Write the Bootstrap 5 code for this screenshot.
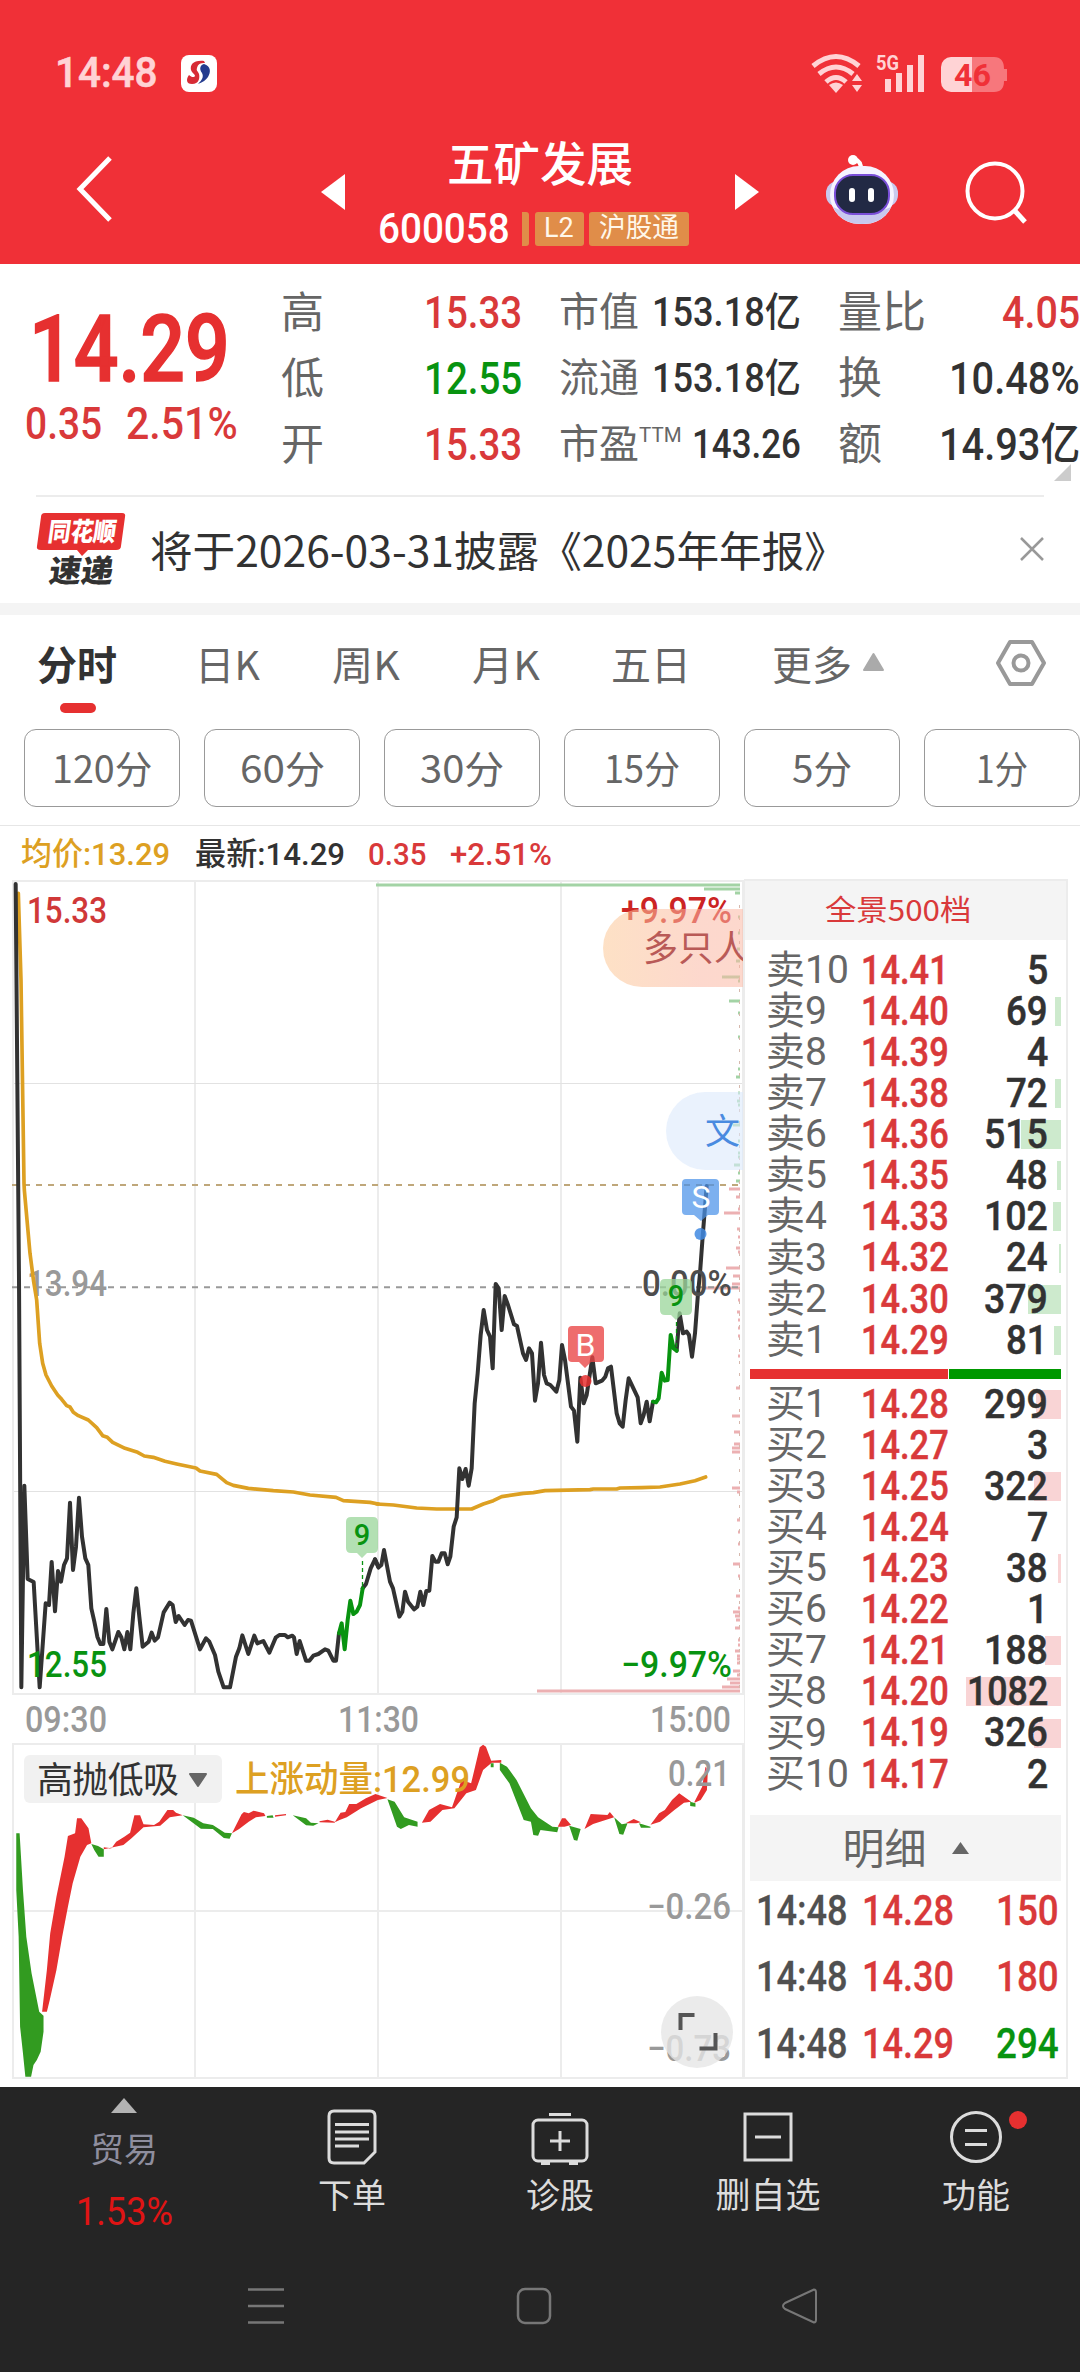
<!DOCTYPE html>
<html lang="zh-CN">
<head>
<meta charset="utf-8">
<meta name="viewport" content="width=device-width, initial-scale=1">
<title>五矿发展 600058</title>
<link href="https://cdn.jsdelivr.net/npm/bootstrap@5.3.0/dist/css/bootstrap.min.css" rel="stylesheet">
<style>
body{font-family:Roboto,"Noto Sans CJK SC",sans-serif;background:#fff;color:#323232;line-height:1}
.app{width:1080px;height:2372px;overflow:hidden}
[data-w]{display:inline-block;white-space:nowrap;line-height:1.2;flex:none}
[data-w]>span{display:inline-block;transform-origin:0 50%}
.cjk{font-family:"Noto Sans CJK SC",sans-serif}
.up{color:#d9393a}.down{color:#089310}.lbl{color:#666}
svg{display:block;flex:none;overflow:visible}
.top-zone{background:#f03037;height:264px;color:#fff}
.status{height:146px;padding:0 73px 0 55px;color:#ffd3d5}
.clock{font-size:42px;font-weight:500;-webkit-text-stroke:.6px}
.title-bar{height:118px;padding:0 54px 0 76px}
.tag{background:#e08d49;height:34px;border-radius:3px;font-size:27px;color:#fff7ea}
.quote{height:231px;padding-top:16px}
.q-main{width:281px;padding-left:25px}
.q-row{height:66px}
.q-num{font-size:44px;font-weight:500}
.q-big{font-size:92px;font-weight:500;line-height:1;margin:24px 0 0 4px;height:91px;color:#e63030;-webkit-text-stroke:1.6px}
.corner{width:17px;height:17px;background:#ccc;clip-path:polygon(100% 0,100% 100%,0 100%);right:9px;top:200px}
.rule{height:2px;background:#ececec}
.news{height:106px;padding:0 36px 2px 36px}
.band{height:12px;background:#f4f4f4}
.tabs{height:114px;padding:0 34px 18px 37px;font-size:40px;color:#666}
.tab-mark{width:36px;height:10px;border-radius:5px;background:#e63030;left:23px;top:60px}
.period{width:156px;height:78px;border:1.5px solid #999;border-radius:12px;font-size:38px;color:#666;background:#fff;padding:0 0 2px}
.info{height:54px;padding:2px 0 0 21px;font-size:32px;font-weight:500}
.chart-col{width:744px}
.book{width:324px;height:1200px;border:2px solid #ececec;border-left-width:1px;margin-top:-1px}
.book-head{height:59px;background:#f4f4f4;font-size:29px;padding:0 16px 4px 0}
.lv{height:41.1px;padding:0 18px 0 21px;font-size:39px;position:relative}
.lv b{font-weight:500;font-size:41px;-webkit-text-stroke:.5px}
.lv-name{width:95px;line-height:41px;position:relative}
.lv-bar{position:absolute;right:5px;top:6px;height:29px}
.q-end{position:relative;text-align:right}
.split{height:10px;margin:0 5px}
.detail{height:66px;margin:0 5px;background:#f4f4f4;color:#666;font-size:42px;padding-top:4px}
.tick{height:66.5px;padding:0 7px 0 11px;font-size:42px;font-weight:500;-webkit-text-stroke:.3px}
.foot{background:#252525;height:285px;color:#dcdcdc}
.nav-cell{width:208px;font-size:34px}
.dot{width:18px;height:18px;background:#e63030;border-radius:50%;right:53px;top:24px}
svg text{font-family:Roboto,"Noto Sans CJK SC",sans-serif;font-weight:500}
</style>
<script src="https://cdn.jsdelivr.net/npm/bootstrap@5.3.0/dist/js/bootstrap.bundle.min.js"></script>
</head>
<body>
<div class="app">
 <header class="top-zone">
  <div class="status d-flex align-items-center">
   <span class="clock" data-w="103">14:48</span>
   <svg style="margin-left:23px" width="36" height="37" viewBox="0 0 36 37"><rect width="36" height="37" rx="8" fill="#fff"/><path d="M23 6C12 5 9 10 10 15c1 3 4 4 4 6-1 2-4 1-6-1-3 4-3 9 3 9 7 0 8-6 7-10-1-3-3-3-2-6 1-4 3-5 8-5z" fill="#d72b35"/><path d="M23 9c7 2 7 8 4 13-2 3-5 5-10 7 4-4 6-7 4-11-3-4-2-8 2-9z" fill="#243c8f"/></svg>
   <svg class="ms-auto" width="197" height="40" viewBox="810 53 197 40" fill="none" stroke="#ffd3d5">
    <path d="M813 66q23-19 46 0M819 74q17-14 34 0M826 82q10-9 20 0" stroke-width="5"/><path d="M829 85q7-5 14 0l-7 8z" fill="#ffd3d5" stroke="none"/><path d="M852 81l5-7 5 7zM852 85l5 7 5-7z" fill="#ffd3d5" stroke="none"/>
    <path d="M888 79v13M899 73v19M910 65v27M921 55v37" stroke-width="6"/>
    <text x="876" y="70" font-size="20" textLength="23" lengthAdjust="spacingAndGlyphs" fill="#ffd3d5" stroke="none" style="font-weight:700">5G</text>
    <path d="M951 57h21v35h-21a10 10 0 0 1-10-10V67a10 10 0 0 1 10-10z" fill="#ffd3d5" stroke="none"/><path d="M972 57h22q10 0 10 12l3 0v12h-3q0 11-10 11h-22z" fill="#f7777c" stroke="none"/>
    <text x="954" y="86" font-size="32" textLength="37" lengthAdjust="spacingAndGlyphs" fill="#f03037" stroke="none" style="font-weight:700">46</text>
   </svg>
  </div>
  <div class="title-bar d-flex">
   <svg width="36" height="66" viewBox="0 0 36 66" style="margin-top:10px"><path d="M34 2L4 33l30 31" fill="none" stroke="#fff" stroke-width="5"/></svg>
   <svg width="24" height="36" style="margin:28px 0 0 209px"><path d="M24 0v36L0 18z" fill="#fff"/></svg>
   <div class="d-flex flex-column align-items-center" style="width:390px;margin-top:-6px">
    <div class="cjk fw-medium" style="font-size:47px;line-height:42px" data-w="186">五矿发展</div>
    <div class="d-flex align-items-center" style="margin:26px 0 0 -14px;height:41px">
     <span style="font-size:43px;font-weight:500" data-w="132">600058</span>
     <span class="tag" style="width:7px;margin-left:12px;border-radius:0 3px 3px 0"></span>
     <span class="tag d-flex align-items-center justify-content-center" style="width:49px;margin-left:6px"><span data-w="30">L2</span></span>
     <span class="tag d-flex align-items-center justify-content-center" style="width:100px;margin-left:5px"><span data-w="80">沪股通</span></span>
    </div>
   </div>
   <svg width="24" height="36" style="margin-top:28px"><path d="M0 0v36l24-18z" fill="#fff"/></svg>
   <svg width="74" height="72" viewBox="824 157 74 72" style="margin:8px 0 0 66px">
    <path d="M860 174q1-10-7-12" fill="none" stroke="#fff" stroke-width="4"/><circle cx="852" cy="163" r="5" fill="#fff"/>
    <rect x="825" y="184" width="72" height="26" rx="12" fill="#c9c9ee"/><rect x="829" y="169" width="64" height="58" rx="29" fill="#f5f3ff"/><path d="M832 210q28 14 58 0-8 17-29 17t-29-17z" fill="#c8c8ee"/>
    <rect x="834" y="178" width="54" height="39" rx="18" fill="#222944" stroke="#7a4fd8" stroke-width="2"/><rect x="848" y="191" width="6" height="14" rx="3" fill="#fff"/><rect x="867" y="191" width="6" height="14" rx="3" fill="#fff"/>
   </svg>
   <svg width="64" height="64" viewBox="964 163 64 64" class="ms-auto" style="margin:15px -3px 0 0" fill="none" stroke="#fff"><circle cx="994" cy="193" r="27.500" stroke-width="4"/><path d="M1014 213l10 11" stroke-width="5"/></svg>
  </div>
 </header>

 <section class="quote d-flex position-relative">
  <div class="q-main">
   <div class="q-big"><span data-w="201" style="line-height:1">14.29</span></div>
   <div class="up d-flex q-num" style="margin-top:3px"><span data-w="77">0.35</span><span data-w="112" style="margin-left:24px">2.51%</span></div>
  </div>
  <div style="width:241px;font-size:43px">
   <div class="q-row d-flex align-items-center justify-content-between"><span class="lbl">高</span><span class="up q-num" data-w="98">15.33</span></div>
   <div class="q-row d-flex align-items-center justify-content-between"><span class="lbl">低</span><span class="down q-num" data-w="98">12.55</span></div>
   <div class="q-row d-flex align-items-center justify-content-between"><span class="lbl">开</span><span class="up q-num" data-w="98">15.33</span></div>
  </div>
  <div style="width:242px;margin-left:37px;font-size:40px">
   <div class="q-row d-flex align-items-center justify-content-between"><span class="lbl">市值</span><span data-w="149" style="font-weight:500">153.18亿</span></div>
   <div class="q-row d-flex align-items-center justify-content-between"><span class="lbl">流通</span><span data-w="149" style="font-weight:500">153.18亿</span></div>
   <div class="q-row d-flex align-items-center justify-content-between"><span class="lbl d-flex">市盈<span data-w="43" style="font-size:21px;margin-top:-2px">TTM</span></span><span data-w="109" style="font-weight:500;font-size:41px">143.26</span></div>
  </div>
  <div style="width:242px;margin-left:37px;font-size:44px">
   <div class="q-row d-flex align-items-center justify-content-between"><span class="lbl">量比</span><span class="up q-num" data-w="78">4.05</span></div>
   <div class="q-row d-flex align-items-center justify-content-between"><span class="lbl">换</span><span class="q-num" data-w="131">10.48%</span></div>
   <div class="q-row d-flex align-items-center justify-content-between"><span class="lbl">额</span><span class="q-num" data-w="141">14.93亿</span></div>
  </div>
  <i class="corner position-absolute"></i>
 </section>
 <div class="rule" style="margin:0 36px"></div>
 <section class="news d-flex align-items-center">
  <svg width="90" height="74" viewBox="36 512 90 74"><path d="M45 513h77q4 0 3 4l-4 29q0 4-5 4H88l-6 6-5-6H41q-5 0-4-4l4-29q0-4 4-4z" fill="#e63030"/>
   <g transform="translate(47 541) skewX(-8)"><text font-size="26" textLength="68" lengthAdjust="spacingAndGlyphs" fill="#fff" style="font-weight:900">同花顺</text></g>
   <g transform="translate(48 582) skewX(-8)"><text font-size="31" textLength="64" lengthAdjust="spacingAndGlyphs" fill="#323232" style="font-weight:900">速递</text></g></svg>
  <span class="cjk" style="font-size:42px;margin-left:24px" data-w="697">将于2026-03-31披露《2025年年报》</span>
  <svg class="ms-auto" width="24" height="24"><path d="M1 1l22 22M23 1L1 23" stroke="#999" stroke-width="2.500"/></svg>
 </section>
 <div class="band"></div>
 <nav class="tabs cjk d-flex align-items-center">
  <span class="position-relative fw-bold" style="color:#323232;width:158px"><span>分时</span><i class="tab-mark position-absolute"></i></span>
  <span style="width:137px"><span data-w="65">日K</span></span>
  <span style="width:140px"><span data-w="68">周K</span></span>
  <span style="width:139px"><span data-w="68">月K</span></span>
  <span style="width:161px">五日</span>
  <span class="d-flex align-items-center">更多<svg style="margin:0 0 2px 10px" width="23" height="19"><path d="M11.500 1L21 17H2z" fill="#aaa" stroke="#aaa" stroke-width="2" stroke-linejoin="round"/></svg></span>
  <svg class="ms-auto" width="50" height="48" viewBox="0 0 50 48" fill="none" stroke="#999"><path d="M14 3h22l12 21-12 21H14L2 24z" stroke-width="4" stroke-linejoin="round"/><circle cx="25" cy="24" r="7.500" stroke-width="4"/></svg>
 </nav>
 <div class="d-flex cjk" style="gap:24px;padding:0 0 18px 24px;width:1110px">
  <button class="period"><span data-w="100">120分</span></button><button class="period"><span data-w="85">60分</span></button><button class="period"><span data-w="84">30分</span></button><button class="period"><span data-w="76">15分</span></button><button class="period"><span data-w="60">5分</span></button><button class="period"><span data-w="52">1分</span></button>
 </div>
 <div class="rule" style="background:#e6e6e6;height:1px"></div>
 <div class="info d-flex align-items-center">
  <span style="color:#dda022" data-w="149">均价:13.29</span><span style="margin-left:25px" data-w="150">最新:14.29</span><span class="up" style="margin-left:23px" data-w="58">0.35</span><span class="up" style="margin-left:24px" data-w="102">+2.51%</span>
 </div>

 <main class="d-flex" style="height:1207px">
  <div class="chart-col">
   <svg width="744" height="863" viewBox="0 880 744 863">
    <g fill="none" stroke="#ececec" stroke-width="2"><path d="M195 881v813M378 881v813M561 881v813"/><path d="M13 1083.500h730M13 1491.500h730" stroke="#e2e2e2" stroke-width="1.200"/><rect x="13" y="881" width="730" height="813"/></g>
    <g id="vol"></g><path d="M739.500 905V1690" stroke="#d6b9ae" stroke-width="1" stroke-dasharray="3 9"/>
    <path d="M12 1185H740" stroke="#bfa77a" stroke-width="2" stroke-dasharray="6 6"/><path d="M12 1287.300H740" stroke="#999" stroke-width="2" stroke-dasharray="6 6"/>
    <g font-size="36"><text x="27" y="923" fill="#d03838" textLength="80" lengthAdjust="spacingAndGlyphs">15.33</text><text x="621" y="923" fill="#cc2424" textLength="111" lengthAdjust="spacingAndGlyphs">+9.97%</text></g>
    <defs><linearGradient id="pk"><stop stop-color="#fcc896"/><stop offset=".7" stop-color="#fbb8a4"/></linearGradient></defs>
    <path d="M743 909H642a39 39 0 0 0 0 78H743z" fill="url(#pk)" fill-opacity=".55"/>
    <path d="M743 1092H705a39 39 0 0 0 0 78H743z" fill="#dbe8fc" fill-opacity=".58"/>
    <svg x="13" y="881" width="730" height="813" viewBox="13 881 730 813" style="overflow:hidden"><text x="643" y="961" font-size="35" fill="#b95a57" style="font-family:'Noto Sans CJK SC';font-weight:400" textLength="106">多只人</text><text x="705" y="1144" font-size="35" fill="#4a8be0" style="font-family:'Noto Sans CJK SC';font-weight:400">文</text></svg>
    <g font-size="36"><text x="27" y="1296" fill="#999" textLength="80" lengthAdjust="spacingAndGlyphs">13.94</text></g>
    <g fill="none" stroke-width="12" stroke-linejoin="round" stroke-linecap="round">
     <g transform="translate(0 1280) scale(.33333)">
      <polyline stroke="#dda022" stroke-width="11" points="55,-1160 63,-900 72,-290 73,-270 90,-80 101,5 110,60 119,190 128,250 138,285 155,318 173,345 185,358 200,377 210,381 220,397 235,407 265,420 290,443 308,467 322,472 338,487 375,505 413,517 433,528 460,532 495,544 530,552 588,564 600,573 650,583 680,608 700,616 745,625 820,632 880,636 930,645 1008,652 1030,662 1110,667 1135,672"/>
      <polyline stroke="#323232" points="47,-1188 57,0 64,1222 73,617 83,897 101,906 119,1222 137,970 147,975 155,846 165,994 174,873 183,905 192,855 201,835 210,668 219,870 228,800 237,653 246,770 256,835 265,855 274,985 283,1025 292,1070 301,1092 310,1092 319,987 328,1085 337,1108 355,1056 364,1072 373,1108 382,1056 391,1108 400,1000 409,925 418,1010 428,1100 446,1085 455,1058 464,1082 474,1072 491,997 509,968 518,975 527,1026 536,1008 554,1035 564,1020 573,1022 600,1108 618,1075 628,1085 645,1125 655,1175 671,1222 690,1222 708,1130 718,1105 727,1066 745,1122 763,1067 772,1090 790,1083 808,1118 827,1073 838,1065 855,1065 863,1072 877,1067 882,1072 890,1122 899,1083 918,1142 928,1142 940,1127 955,1122 975,1108 985,1112 1000,1142 1008,1142 1017,1060"/>
      <polyline stroke="#323232" points="1088,925 1098,912 1112,865 1125,838 1135,862"/>
      <polyline stroke="#089310" points="1017,1060 1025,1030 1034,1108 1043,1020 1051,962 1060,1002 1070,995 1080,975 1088,925"/>
     </g>
     <g transform="translate(370 1280) scale(.33333)">
      <polyline stroke="#dda022" stroke-width="11" points="20,672 70,675 140,684 200,687 305,687 340,672 370,662 395,650 460,640 490,638 525,632 660,629 670,627 740,627 750,624 815,623 870,621 930,612 975,602 1007,591"/>
      <polyline stroke="#323232" points="15,838 26,862 34,855 42,810 60,905 69,925 88,1010 97,995 105,935 114,965 132,988 142,980 151,935 160,975 169,933 178,932 187,828 196,845 205,845 215,820 224,820 233,853 241,830 251,740 260,712 268,565 277,597 287,567 296,617 305,565 314,370 323,280 332,165 341,90 351,150 360,170 368,265 377,12 386,25 395,150 404,48 414,75 432,133 441,138 459,220 468,240 477,205 486,220 495,362 504,310 513,188 522,285 530,310 541,315 559,335 568,300 576,195 585,240 603,380 612,392 622,485 631,293 641,370 650,345 667,232 677,310 696,302 706,290 714,265 723,260 740,400 749,430 758,440 767,360 776,295 803,352 812,430 821,405 830,365 839,424 849,365"/>
      <polyline stroke="#323232" points="920,212 929,100 939,160 950,155 957,165 966,230 975,160 984,40 990,-20 998,-130 1010,-282"/>
      <polyline stroke="#089310" points="849,365 858,367 866,355 875,278 884,302 893,300 902,165 911,205 920,212"/>
     </g>
    </g>
    <g font-size="36"><text x="27" y="1677" fill="#089310" textLength="80" lengthAdjust="spacingAndGlyphs">12.55</text><text x="642" y="1296" fill="#4d4d4d" textLength="90" lengthAdjust="spacingAndGlyphs">0.00%</text><text x="621" y="1677" fill="#089310" textLength="111" lengthAdjust="spacingAndGlyphs">−9.97%</text></g>
    <g fill="#9ad69a" fill-opacity=".75"><path d="M351 1517h22q5 0 5 5v26q0 5-5 5h-6l-5 5-5-5h-6q-5 0-5-5v-26q0-5 5-5zM665 1279h22q5 0 5 5v26q0 5-5 5h-6l-5 5-5-5h-6q-5 0-5-5v-26q0-5 5-5z"/></g>
    <path d="M362.500 1561v27M676.500 1322v28" stroke="#089310" stroke-dasharray="4 3" stroke-width="1.300"/>
    <g font-size="29" fill="#089310" text-anchor="middle"><text x="362" y="1545">9</text><text x="676" y="1306">9</text></g>
    <path d="M572 1326h28q4 0 4 4v28q0 4-4 4h-9l-6 6-6-6h-7q-4 0-4-4v-28q0-4 4-4z" fill="#e94444" fill-opacity=".78"/><circle cx="585.500" cy="1381" r="6" fill="#e63030" fill-opacity=".85"/>
    <path d="M686 1179h29q4 0 4 4v28q0 4-4 4h-7l-7 6-7-6h-8q-4 0-4-4v-28q0-4 4-4z" fill="#4a91e9" fill-opacity=".72"/><circle cx="700.500" cy="1234" r="6" fill="#4189e2" fill-opacity=".85"/>
    <g font-size="32" fill="#fff" text-anchor="middle"><text x="585.500" y="1356" style="font-weight:400">B</text><text x="701" y="1208" style="font-weight:400">S</text></g>
    <g font-size="37" fill="#999"><text x="25" y="1732" textLength="82" lengthAdjust="spacingAndGlyphs">09:30</text><text x="338" y="1732" textLength="81" lengthAdjust="spacingAndGlyphs">11:30</text><text x="650" y="1732" textLength="81" lengthAdjust="spacingAndGlyphs">15:00</text></g>
   </svg>
   <svg width="744" height="337" viewBox="0 1743 744 337">
    <g fill="none" stroke="#ececec" stroke-width="2"><path d="M195 1744v334M378 1744v334M561 1744v334M13 1911h730"/><rect x="13" y="1744" width="730" height="334"/></g>
    <rect x="24" y="1755" width="198" height="48" rx="6" fill="#f1f1f1"/><text x="37" y="1793" font-size="36" fill="#323232" textLength="142" style="font-weight:400">高抛低吸</text><path d="M190 1774h16l-8 12z" fill="#666" stroke="#666" stroke-width="2" stroke-linejoin="round"/>
    <g transform="translate(0 1730) scale(.4783 .33333)">
     <path fill="#e63030" d="M88 845L98 845 104 810 118 720 130 620 142 530 152 460 168 380 182 345 191 340 185 295 170 265 161 265 157 310 142 318 135 380 118 500 105 610 98 720zM217 352L233 355 243 335 260 320 272 308 281 256 293 256 300 283 322 285 333 275 350 240 362 240 368 248 382 256 355 262 335 287 300 292 275 325 258 345 217 358zM485 310L505 253 510 246 520 250 530 242 552 250 555 258 535 262 520 275 500 297zM575 256L598 252 598 256 575 260zM668 274L685 269 700 275 700 278 668 277zM700 277L712 248 722 246 730 222 745 222 765 205 785 192 810 204 790 210 755 235 725 262 710 270zM882 278L897 240 920 222 945 232 965 150 985 160 1003 52 1010 44 1016 50 1027 92 1048 90 1048 98 1028 98 1010 120 995 180 975 190 950 235 925 240 900 275zM1166 290L1175 265 1182 265 1194 285 1180 290zM1222 297L1235 252 1270 255 1275 246 1284 262 1240 282zM1308 280L1325 267 1340 277 1330 280zM1360 284L1378 250 1390 240 1405 210 1420 190 1445 215 1430 218 1410 240 1380 275zM1452 215L1468 170 1475 110 1480 120 1478 180 1465 210 1452 218z"/>
     <path fill="#329b20" d="M34 310L41 310 48 480 55 620 66 730 82 845 91 857 91 905 85 965 77 990 70 1005 65 1040 53 1040 48 970 42 890 39 620 34 480zM191 342L205 348 217 358 217 380 206 380 197 360zM382 256L405 263 425 280 445 285 470 308 485 310 480 326 468 324 445 297 420 296zM558 258L570 256 572 263 558 263zM612 256L640 265 650 278 666 280 655 287 640 286zM810 208L825 215 845 262 873 275 873 290 855 285 838 297 830 290zM1026 100h6v12h-6zM1045 98L1060 110 1080 150 1110 235 1125 262 1155 290 1168 292 1165 307 1130 300 1125 317 1115 315 1110 275 1095 270 1065 160 1045 120zM1190 287L1214 297 1207 332 1200 330zM1284 262L1300 283 1312 280 1303 314 1295 312zM1336 280L1360 290 1360 293 1340 293zM1443 215L1454 220 1454 230 1443 228z"/>
    </g>
    <g font-size="36" fill="#999"><text x="668" y="1786" textLength="62" lengthAdjust="spacingAndGlyphs">0.21</text><text x="647" y="1919" textLength="84" lengthAdjust="spacingAndGlyphs">−0.26</text><text x="647" y="2061" textLength="84" lengthAdjust="spacingAndGlyphs">−0.73</text></g>
    <text x="235" y="1792" font-size="36" fill="#dda022" textLength="235" lengthAdjust="spacingAndGlyphs">上涨动量:12.99</text>
    <circle cx="697" cy="2032" r="36" fill="#e6e6e6" fill-opacity=".78"/><path d="M680.500 2030v-15h14M715.500 2033v15.500h-16" fill="none" stroke="#555" stroke-width="4"/>
   </svg>
  </div>
  <div class="book d-flex flex-column">
   <div class="book-head up d-flex align-items-center justify-content-center"><span class="cjk" data-w="146">全景500档</span></div>
   <div id="asks" style="margin-top:10px"></div>
   <div class="split d-flex" style="margin-top:8px"><div style="width:198px;background:#e63030"></div><div class="flex-grow-1" style="background:#009800;margin-left:1px"></div></div>
   <div id="bids" style="margin-top:5px"></div>
   <div class="detail d-flex align-items-center justify-content-center" style="margin-top:20px"><span>明细</span><svg width="17" height="12" style="margin:0 0 4px 25px"><path d="M8.500 0L17 12H0z" fill="#666"/></svg></div>
   <div id="ticks" style="margin-top:-3px"></div>
  </div>
 </main>

 <footer class="foot">
  <div class="d-flex" style="height:154px">
   <div class="nav-cell d-flex flex-column align-items-center" style="width:248px;padding-top:11px">
    <svg width="26" height="15"><path d="M13 0l13 15H0z" fill="#b3b3b3"/></svg>
    <span style="color:#8e8e9e;font-size:34px;margin-top:20px">贸易</span>
    <span style="color:#e01414;font-size:38px;margin-top:23px;" data-w="97">1.53%</span>
   </div>
   <div class="nav-cell d-flex flex-column align-items-center" style="padding-top:21px">
    <svg width="52" height="60" viewBox="0 0 52 60" fill="none" stroke="#dcdcdc" stroke-width="3"><path d="M8 3h36q5 0 5 5v36L38 55H8q-5 0-5-5V8q0-5 5-5z"/><path d="M9 16.500h34M9 24h34M9 31h34M9 38h24"/></svg>
    <span style="margin-top:11px">下单</span>
   </div>
   <div class="nav-cell d-flex flex-column align-items-center" style="padding-top:21px">
    <svg width="60" height="60" viewBox="0 0 60 60" fill="none" stroke="#dcdcdc" stroke-width="3"><rect x="3" y="12" width="54" height="41" rx="5"/><path d="M19 6.500h22M30 23v20M20 33h20"/><path d="M11 55h9M39 55h9" stroke-width="4"/></svg>
    <span style="margin-top:11px">诊股</span>
   </div>
   <div class="nav-cell d-flex flex-column align-items-center" style="padding-top:21px">
    <svg width="52" height="60" viewBox="0 0 52 60" fill="none" stroke="#dcdcdc" stroke-width="3"><rect x="3" y="6" width="46" height="46"/><path d="M13 29h26"/></svg>
    <span style="margin-top:11px;font-size:35px">删自选</span>
   </div>
   <div class="nav-cell d-flex flex-column align-items-center position-relative" style="padding-top:21px">
    <svg width="54" height="60" viewBox="0 0 54 60" fill="none" stroke="#dcdcdc" stroke-width="3"><circle cx="27" cy="29" r="24.500"/><path d="M16 22.500h22M16 36.500h22"/></svg>
    <span style="margin-top:11px">功能</span><i class="dot position-absolute"></i>
   </div>
  </div>
  <div class="d-flex" style="padding:45px 0 0 247px">
   <svg width="571" height="40" viewBox="247 2286 571 40" fill="none" stroke="#777" stroke-width="2.500"><path d="M248 2289.500h36M248 2306h36M248 2322.500h36"/><rect x="518" y="2289" width="32" height="34" rx="7"/><path d="M814 2289.500L785 2303q-4 3 0 6l29 13.500q2 0 2-3v-27q0-3-2-3z" stroke-linejoin="round" stroke-width="2"/></svg>
  </div>
 </footer>
</div>
<script>
const asks=[['卖10','14.41',5,0],['卖9','14.40',69,6],['卖8','14.39',4,0],['卖7','14.38',72,6],['卖6','14.36',515,40],['卖5','14.35',48,4],['卖4','14.33',102,8],['卖3','14.32',24,2],['卖2','14.30',379,33],['卖1','14.29',81,7]];
const bids=[['买1','14.28',299,25],['买2','14.27',3,0],['买3','14.25',322,27],['买4','14.24',7,0],['买5','14.23',38,3],['买6','14.22',1,0],['买7','14.21',188,16],['买8','14.20',1082,95],['买9','14.19',326,27],['买10','14.17',2,0]];
const level=c=>([n,p,q,w])=>`<div class="lv d-flex align-items-center"><i class="lv-bar" style="width:${w}px;background:${c}"></i><span class="lbl lv-name flex-none">${n}</span><b class="up" data-w="88">${p}</b><b class="q-end ms-auto" data-w="${[21,42,64,81][String(q).length-1]}">${q}</b></div>`;
document.getElementById('asks').innerHTML=asks.map(level('#cdeacd')).join('');
document.getElementById('bids').innerHTML=bids.map(level('#f9d4d5')).join('');
document.getElementById('ticks').innerHTML=[['14.28',150,'up'],['14.30',180,'up'],['14.29',294,'down']].map(([p,q,c])=>`<div class="tick d-flex align-items-center"><span style="color:#505050" data-w="92">14:48</span><span class="up" style="margin-left:14px" data-w="92">${p}</span><span class="${c} ms-auto" data-w="63">${q}</span></div>`).join('');
/* volume by price: [y, length] */
const sell=[[885,364],[889,36],[893,5],[917,2],[933,2],[949,3],[961,4],[977,18],[981,2],[1001,11],[1013,2],[1037,2],[1069,2],[1077,4],[1093,2],[1101,3],[1105,2],[1125,7],[1141,2],[1153,2],[1157,2],[1165,6],[1173,2],[1181,4]];
const buy=[[1189,11],[1197,4],[1209,2],[1213,16],[1229,3],[1237,2],[1248,4],[1252,2],[1268,14],[1276,7],[1284,8],[1288,38],[1300,2],[1312,3],[1320,2],[1328,2],[1336,2],[1356,2],[1388,4],[1416,8],[1432,6],[1444,6],[1448,8],[1452,8],[1488,8],[1492,3],[1520,3],[1532,2],[1544,2],[1564,7],[1576,2],[1596,4],[1608,2],[1612,7],[1616,5],[1620,4],[1628,5],[1640,2],[1645,2],[1651,5],[1656,3],[1659,3],[1663,3],[1671,7],[1675,3],[1679,13],[1683,10],[1687,18],[1691,203]];
const bars=(a,c)=>a.map(([y,l])=>`<rect x="${740-l}" y="${y-1.5}" width="${l}" height="3" fill="${c}"/>`).join('');
document.getElementById('vol').innerHTML=bars(sell,'#a3d3a5')+bars(buy,'#ecb0b2');
/* condense each label to its column width */
document.querySelectorAll('[data-w]').forEach(e=>{const s=document.createElement('span');s.append(...e.childNodes);e.append(s);const n=s.offsetWidth,w=+e.dataset.w;e.style.width=w+'px';e.style.textAlign='left';s.style.transform=`scaleX(${w/n})`;});
</script>
</body>
</html>
